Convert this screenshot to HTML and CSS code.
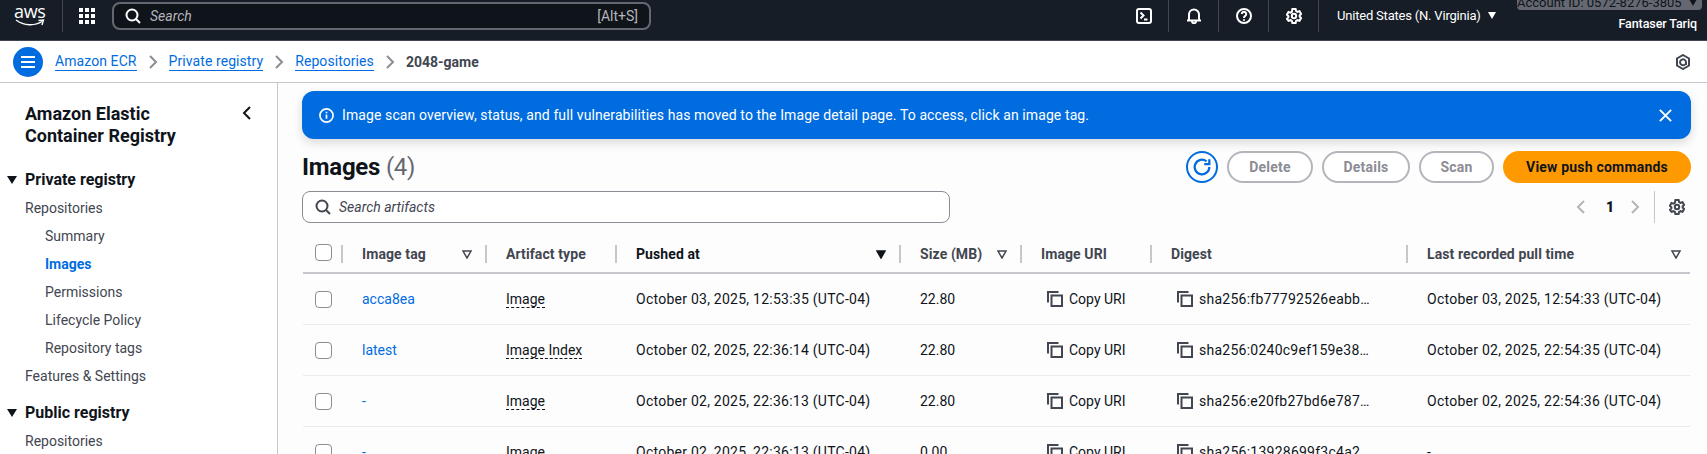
FILE: index.html
```html
<!DOCTYPE html>
<html lang="en">
<head>
    <meta charset="UTF-8">
    <meta name="viewport" content="width=device-width, initial-scale=1.0">
    <title>Images - 2048-game</title>
    <link rel="stylesheet" href="styles.css">
</head>
<body>
    <svg class="sprite" aria-hidden="true">
        <symbol id="i-search" viewBox="0 0 16 16"><circle cx="7" cy="7" r="5.500"/><path d="M11 11 15 15"/></symbol>
        <symbol id="i-gear" viewBox="0 0 16 16"><path d="M6.400 1h3.200l.5 2 1.400.8 2-.6 1.600 2.800-1.500 1.400v1.200l1.500 1.400-1.600 2.800-2-.6-1.400.8-.5 2H6.400l-.5-2-1.400-.8-2 .6L.9 10.800l1.500-1.400V8.200L.9 6.800 2.500 4l2 .6 1.400-.8z"/><circle cx="8" cy="8" r="2.200"/></symbol>
        <symbol id="i-copy" viewBox="0 0 16 16"><path d="M1 11.500V1h10.500"/><rect x="4.500" y="4.500" width="10.500" height="10.500"/></symbol>
        <symbol id="i-left" viewBox="0 0 16 16"><path d="M11 2 5 8l6 6"/></symbol>
        <symbol id="i-right" viewBox="0 0 16 16"><path d="m5 2 6 6-6 6"/></symbol>
        <symbol id="i-sort" viewBox="0 0 10 9"><path d="M1 1h8L5 8z"/></symbol>
    </svg>

    <header class="topbar">
        <div class="logo">
            <span class="logo-text">aws</span>
            <svg class="logo-smile" viewBox="0 0 30 8"><path d="M1 1c8 6 19 6 26 1.500"/><path d="M23.500 1.500 28.500 1l-1.500 5"/></svg>
        </div>
        <div class="apps">
            <span></span><span></span><span></span>
            <span></span><span></span><span></span>
            <span></span><span></span><span></span>
        </div>
        <div class="global-search">
            <svg class="icon"><use href="#i-search"/></svg>
            <span class="global-search-text">Search</span>
            <span class="global-search-key">[Alt+S]</span>
        </div>
        <div class="top-icons">
            <div class="top-icon">
                <svg class="icon" viewBox="0 0 16 16"><rect x="1" y="1" width="14" height="14" rx="2"/><path d="m4.500 4.500 3 3-3 3M8 11.500h3.500"/></svg>
            </div>
            <div class="top-icon">
                <svg class="icon" viewBox="0 0 16 16"><path d="M1 12.500h14M3 12.500V6.500a5 5 0 0 1 10 0v6M6 13c0 3 4 3 4 0"/></svg>
            </div>
            <div class="top-icon">
                <svg class="icon" viewBox="0 0 16 16"><circle cx="8" cy="8" r="7"/><path d="M5.800 6a2.200 2.200 0 1 1 3.400 1.900C8.300 8.500 8 9 8 10M8 11.300v1.400"/></svg>
            </div>
            <div class="top-icon">
                <svg class="icon"><use href="#i-gear"/></svg>
            </div>
        </div>
        <div class="region">United States (N. Virginia)<i class="caret"></i></div>
        <div class="account">
            <div class="account-id">Account ID: 0572-8276-3805<i class="caret dark"></i></div>
            <div class="account-name">Fantaser Tariq</div>
        </div>
    </header>

    <nav class="crumbs">
        <button class="menu-btn"><span></span><span></span><span></span></button>
        <a href="#">Amazon ECR</a>
        <svg class="crumb-sep"><use href="#i-right"/></svg>
        <a href="#">Private registry</a>
        <svg class="crumb-sep"><use href="#i-right"/></svg>
        <a href="#">Repositories</a>
        <svg class="crumb-sep"><use href="#i-right"/></svg>
        <b>2048-game</b>
        <svg class="crumb-tool" viewBox="0 0 16 16"><path d="M8 1 14 4.500v7L8 15l-6-3.500v-7z"/><path d="M10.500 10A3 3 0 1 1 11 8v3"/></svg>
    </nav>

    <div class="layout">
        <aside class="sidebar">
            <div class="side-head">
                <h2>Amazon Elastic Container Registry</h2>
                <svg class="side-close"><use href="#i-left"/></svg>
            </div>
            <h3><span class="tri"></span>Private registry</h3>
            <ul>
                <li>Repositories</li>
                <li class="sub">Summary</li>
                <li class="sub active">Images</li>
                <li class="sub">Permissions</li>
                <li class="sub">Lifecycle Policy</li>
                <li class="sub">Repository tags</li>
                <li>Features &amp; Settings</li>
            </ul>
            <h3><span class="tri"></span>Public registry</h3>
            <ul>
                <li>Repositories</li>
            </ul>
        </aside>

        <main class="content">
            <div class="flash">
                <svg class="flash-icon" viewBox="0 0 16 16"><circle cx="8" cy="8" r="7"/><path d="M8 7v4.500M8 4v1.500"/></svg>
                <span>Image scan overview, status, and full vulnerabilities has moved to the Image detail page. To access, click an image tag.</span>
                <svg class="flash-close" viewBox="0 0 16 16"><path d="m2 2 12 12M14 2 2 14"/></svg>
            </div>

            <div class="head-row">
                <h1>Images <span>(4)</span></h1>
                <div class="actions">
                    <button class="btn-refresh"><svg viewBox="0 0 16 16"><path d="M14.500 8A6.500 6.500 0 1 1 12 2.900"/><path d="M14.500 1v4.500H10"/></svg></button>
                    <button class="btn btn-delete">Delete</button>
                    <button class="btn btn-details">Details</button>
                    <button class="btn btn-scan">Scan</button>
                    <button class="btn btn-primary">View push commands</button>
                </div>
            </div>

            <div class="tools-row">
                <div class="filter">
                    <svg class="icon"><use href="#i-search"/></svg>
                    <span>Search artifacts</span>
                </div>
                <div class="pager">
                    <svg class="pager-arrow"><use href="#i-left"/></svg>
                    <b>1</b>
                    <svg class="pager-arrow"><use href="#i-right"/></svg>
                    <svg class="icon pager-gear"><use href="#i-gear"/></svg>
                </div>
            </div>

            <table class="images">
                <colgroup>
                    <col class="c-check"><col class="c-tag"><col class="c-type"><col class="c-pushed">
                    <col class="c-size"><col class="c-uri"><col class="c-digest"><col class="c-pull">
                </colgroup>
                <thead>
                    <tr>
                        <th class="check"><i class="box"></i></th>
                        <th><div class="th-in">Image tag<svg class="sort"><use href="#i-sort"/></svg></div></th>
                        <th><div class="th-in">Artifact type</div></th>
                        <th><div class="th-in on">Pushed at<svg class="sort fill"><use href="#i-sort"/></svg></div></th>
                        <th><div class="th-in">Size (MB)<svg class="sort"><use href="#i-sort"/></svg></div></th>
                        <th><div class="th-in">Image URI</div></th>
                        <th><div class="th-in">Digest</div></th>
                        <th><div class="th-in th-last">Last recorded pull time<svg class="sort"><use href="#i-sort"/></svg></div></th>
                    </tr>
                </thead>
                <tbody>
                    <tr>
                        <td class="check"><i class="box"></i></td>
                        <td><a href="#">acca8ea</a></td>
                        <td><u>Image</u></td>
                        <td class="wide">October 03, 2025, 12:53:35 (UTC-04)</td>
                        <td>22.80</td>
                        <td class="copy"><svg class="copy-icon"><use href="#i-copy"/></svg>Copy URI</td>
                        <td class="copy wide"><svg class="copy-icon"><use href="#i-copy"/></svg>sha256:fb77792526eabb…</td>
                        <td class="wide">October 03, 2025, 12:54:33 (UTC-04)</td>
                    </tr>
                    <tr>
                        <td class="check"><i class="box"></i></td>
                        <td><a href="#">latest</a></td>
                        <td><u>Image Index</u></td>
                        <td class="wide">October 02, 2025, 22:36:14 (UTC-04)</td>
                        <td>22.80</td>
                        <td class="copy"><svg class="copy-icon"><use href="#i-copy"/></svg>Copy URI</td>
                        <td class="copy wide"><svg class="copy-icon"><use href="#i-copy"/></svg>sha256:0240c9ef159e38…</td>
                        <td class="wide">October 02, 2025, 22:54:35 (UTC-04)</td>
                    </tr>
                    <tr>
                        <td class="check"><i class="box"></i></td>
                        <td><a href="#">-</a></td>
                        <td><u>Image</u></td>
                        <td class="wide">October 02, 2025, 22:36:13 (UTC-04)</td>
                        <td>22.80</td>
                        <td class="copy"><svg class="copy-icon"><use href="#i-copy"/></svg>Copy URI</td>
                        <td class="copy wide"><svg class="copy-icon"><use href="#i-copy"/></svg>sha256:e20fb27bd6e787…</td>
                        <td class="wide">October 02, 2025, 22:54:36 (UTC-04)</td>
                    </tr>
                    <tr>
                        <td class="check"><i class="box"></i></td>
                        <td><a href="#">-</a></td>
                        <td><u>Image</u></td>
                        <td class="wide">October 02, 2025, 22:36:13 (UTC-04)</td>
                        <td>0.00</td>
                        <td class="copy"><svg class="copy-icon"><use href="#i-copy"/></svg>Copy URI</td>
                        <td class="copy wide"><svg class="copy-icon"><use href="#i-copy"/></svg>sha256:13928699f3c4a2…</td>
                        <td>-</td>
                    </tr>
                </tbody>
            </table>
        </main>
    </div>
</body>
</html>
```

FILE: styles.css
```css
body {
    margin: 0;
    height: 454px;
    overflow: hidden;
    font-family: Roboto, "Noto Sans", sans-serif;
    font-size: 14px;
    color: #0f141a;
    background: #fff;
}

.sprite {
    display: none;
}

svg {
    fill: none;
    stroke: currentColor;
    stroke-width: 2;
}

.icon {
    width: 16px;
    height: 16px;
    flex: none;
}

/* top bar */
.topbar {
    display: flex;
    align-items: flex-start;
    height: 41px;
    overflow: hidden;
    box-sizing: border-box;
    background: #161d26;
    color: #fff;
    border-bottom: 1px solid #424650;
}

.logo {
    flex: none;
    width: 63px;
    height: 32px;
    box-sizing: border-box;
    padding: 3px 0 0 14px;
    border-right: 1px solid #424650;
    display: flex;
    flex-direction: column;
}

.logo-text {
    font-family: "Open Sans", sans-serif;
    font-size: 18px;
    line-height: 16px;
    letter-spacing: -0.3px;
}

.logo-smile {
    width: 32px;
    height: 8px;
    stroke-width: 1.4;
}

.apps {
    flex: none;
    display: grid;
    grid-template-columns: repeat(3, 4px);
    gap: 2px;
    margin: 8px 0 0 16px;
}

.apps span {
    width: 4px;
    height: 4px;
    background: #fff;
}

.global-search {
    flex: none;
    display: flex;
    align-items: center;
    width: 539px;
    height: 28px;
    box-sizing: border-box;
    margin: 2px 0 0 17px;
    padding: 0 11px;
    background: #0f141a;
    border: 2px solid #656871;
    border-radius: 8px;
}

.global-search-text {
    margin-left: 9px;
    font-style: italic;
    color: #b4b4bb;
}

.global-search-key {
    margin-left: auto;
    color: #b4b4bb;
}

.top-icons {
    display: flex;
    margin-left: auto;
    margin-right: 18px;
}

.top-icon {
    display: flex;
    justify-content: center;
    width: 49px;
    padding: 8px 0;
    border-right: 1px solid #424650;
}

.region {
    flex: none;
    width: 180px;
    font-size: 13px;
    line-height: 32px;
    letter-spacing: -0.2px;
}

.caret {
    display: inline-block;
    margin-left: 7px;
    vertical-align: 1px;
    border-left: 4px solid transparent;
    border-right: 4px solid transparent;
    border-top: 7px solid #fff;
}

.caret.dark {
    border-top-color: #0f141a;
}

.account {
    flex: none;
    width: 185px;
    margin: -9px 5px 0 0;
    text-align: right;
}

.account-id {
    box-sizing: border-box;
    height: 19px;
    padding-right: 7px;
    background: #656871;
    border-radius: 4px;
    line-height: 23px;
    font-size: 13px;
    white-space: nowrap;
    color: #0f141a;
}

.account-name {
    margin-top: 6px;
    padding-right: 5px;
    font-size: 12.5px;
    font-weight: 500;
    letter-spacing: -0.1px;
}

/* breadcrumbs */
.crumbs {
    display: flex;
    align-items: center;
    height: 42px;
    box-sizing: border-box;
    padding: 0 16px 0 13px;
    border-bottom: 1px solid #c6c6cd;
    color: #424650;
}

.crumbs a {
    color: #006ce0;
    text-decoration: none;
    border-bottom: 1px solid #006ce0;
    line-height: 17px;
    letter-spacing: 0.08px;
}

.crumbs b {
    font-weight: 700;
}

.menu-btn {
    display: flex;
    flex-direction: column;
    justify-content: center;
    align-items: center;
    gap: 3px;
    width: 30px;
    height: 30px;
    margin-right: 12px;
    padding: 0;
    border: 0;
    border-radius: 50%;
    background: #006ce0;
}

.menu-btn span {
    width: 14px;
    height: 2px;
    background: #fff;
}

.crumb-sep {
    width: 16px;
    height: 16px;
    margin: 0 8px;
    color: #8c8c94;
}

.crumb-tool {
    width: 16px;
    height: 16px;
    margin-left: auto;
    color: #424650;
}

/* layout */
.layout {
    display: flex;
    height: 371px;
    overflow: hidden;
}

.sidebar {
    width: 278px;
    flex: none;
    box-sizing: border-box;
    border-right: 1px solid #c6c6cd;
    padding-top: 20px;
    color: #424650;
}

.side-head {
    display: flex;
    justify-content: space-between;
    padding: 0 22px 0 25px;
    color: #0f141a;
}

.side-head h2 {
    width: 170px;
    margin: 0;
    font-size: 18px;
    line-height: 22px;
    font-weight: 700;
}

.side-close {
    width: 16px;
    height: 16px;
    margin-top: 2px;
}

.sidebar h3 {
    display: flex;
    align-items: center;
    margin: 22px 0 0;
    padding-left: 7px;
    font-size: 16px;
    line-height: 22px;
    font-weight: 700;
    color: #0f141a;
}

.sidebar ul + h3 {
    margin-top: 12px;
}

.tri {
    width: 0;
    height: 0;
    margin-right: 8px;
    border-left: 5px solid transparent;
    border-right: 5px solid transparent;
    border-top: 8px solid #0f141a;
}

.sidebar ul {
    list-style: none;
    margin: 3px 0 0;
    padding: 0 0 0 25px;
}

.sidebar li {
    line-height: 28px;
}

.sidebar .sub {
    padding-left: 20px;
}

.sidebar .active {
    color: #006ce0;
    font-weight: 700;
}

/* main */
.content {
    flex: 1;
    min-width: 0;
    padding: 8px 16px 0 24px;
    background: #fdfdfd;
}

.flash {
    display: flex;
    align-items: center;
    height: 48px;
    padding: 0 18px 0 17px;
    border-radius: 12px;
    background: #006ce0;
    color: #fff;
    letter-spacing: 0.1px;
    box-shadow: 0 4px 10px rgba(15, 20, 26, 0.15);
}

.flash-icon {
    width: 15px;
    height: 15px;
    margin-right: 8px;
    stroke-width: 1.8;
}

.flash-close {
    width: 15px;
    height: 15px;
    margin-left: auto;
}

.head-row {
    display: flex;
    justify-content: space-between;
    align-items: center;
    margin-top: 12px;
    height: 32px;
}

.head-row h1 {
    margin: 0;
    font-size: 24px;
    font-weight: 700;
    letter-spacing: -0.25px;
}

.head-row h1 span {
    font-weight: 400;
    color: #656871;
}

.actions {
    display: flex;
    gap: 9px;
}

.btn-refresh {
    width: 32px;
    height: 32px;
    padding: 0;
    display: flex;
    align-items: center;
    justify-content: center;
    border: 2px solid #006ce0;
    border-radius: 50%;
    background: #fff;
    color: #006ce0;
}

.btn-refresh svg {
    width: 18px;
    height: 18px;
}

.btn {
    height: 32px;
    padding: 0;
    border: 2px solid #b4b4bb;
    border-radius: 16px;
    background: #fff;
    color: #8c8c94;
    font: 700 14px Roboto, sans-serif;
    letter-spacing: 0.2px;
}

.btn-delete { width: 86px; }
.btn-details { width: 88px; }
.btn-scan { width: 75px; }

.btn-primary {
    width: 188px;
    border-color: #ff9900;
    background: #ff9900;
    color: #0f141a;
}

.tools-row {
    display: flex;
    justify-content: space-between;
    margin-top: 8px;
}

.filter {
    display: flex;
    align-items: center;
    width: 648px;
    height: 32px;
    box-sizing: border-box;
    padding: 0 12px;
    border: 1px solid #8c8c94;
    border-radius: 8px;
    background: #fff;
    color: #424650;
}

.filter span {
    margin-left: 8px;
    font-style: italic;
}

.pager {
    display: flex;
    align-items: center;
    color: #0f141a;
    font-weight: 700;
}

.pager-arrow {
    width: 16px;
    height: 16px;
    color: #b4b4bb;
}

.pager b {
    margin: 0 13px 0 17px;
}

.pager-gear {
    margin-left: 11px;
    padding: 8px 6px 8px 14px;
    color: #424650;
    border-left: 1px solid #c6c6cd;
}

/* table */
.images {
    table-layout: fixed;
    width: 1387px;
    margin: 7px 0 0 1px;
    border-collapse: collapse;
}

.c-check { width: 38px; }
.c-tag { width: 144px; }
.c-type { width: 130px; }
.c-pushed { width: 284px; }
.c-size { width: 121px; }
.c-uri { width: 130px; }
.c-digest { width: 256px; }
.c-pull { width: 284px; }

.images th {
    height: 36px;
    padding: 6px 0 0;
    text-align: left;
    color: #424650;
    font-weight: 700;
    letter-spacing: 0.1px;
    border-bottom: 2px solid #c6c6cd;
}

.images th.check {
    padding: 2px 0 0 12px;
    height: 40px;
}

.th-in {
    display: flex;
    align-items: center;
    justify-content: space-between;
    height: 18px;
    padding: 0 13px 0 19px;
    border-left: 2px solid #c6c6cd;
}

.th-in.on {
    color: #0f141a;
}

.th-in.th-last {
    padding-right: 9px;
}

.images td {
    height: 50px;
    padding: 0 0 0 21px;
    border-bottom: 1px solid #e9ebed;
    white-space: nowrap;
}

.images .wide {
    letter-spacing: 0.25px;
}

.images td.check {
    padding: 0 0 0 12px;
}

.box {
    display: block;
    width: 15px;
    height: 15px;
    border: 1px solid #8c8c94;
    border-radius: 4px;
    background: #fff;
}

.sort {
    width: 10px;
    height: 9px;
    flex: none;
    stroke-width: 1.5;
    color: #424650;
}

.sort.fill {
    fill: #0f141a;
    color: #0f141a;
}

.images a {
    color: #006ce0;
    text-decoration: none;
}

.images u {
    text-decoration: none;
    border-bottom: 1px dashed #0f141a;
}

.images .copy {
    padding-left: 27px;
}

.copy-icon {
    width: 16px;
    height: 16px;
    margin-right: 6px;
    vertical-align: -3px;
    color: #424650;
}
```
